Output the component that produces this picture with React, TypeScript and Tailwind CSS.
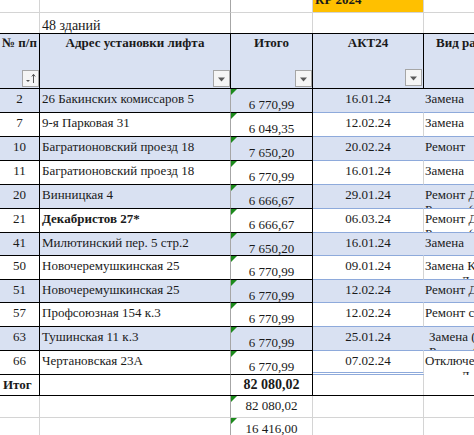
import React from 'react';

type Row = {
  n: string;
  addr: string;
  sum: string;
  date: string;
  work: string;
  more?: string;
  bold?: boolean;
  indent?: boolean;
  h: string;
};

const rows: Row[] = [
  { n: '2', addr: '26 Бакинских комиссаров 5', sum: '6 770,99', date: '16.01.24', work: 'Замена', h: 'h-[24px]' },
  { n: '7', addr: '9-я Парковая 31', sum: '6 049,35', date: '12.02.24', work: 'Замена', h: 'h-[24px]' },
  { n: '10', addr: 'Багратионовский проезд 18', sum: '7 650,20', date: '20.02.24', work: 'Ремонт', h: 'h-[24px]' },
  { n: '11', addr: 'Багратионовский проезд 18', sum: '6 770,99', date: '16.01.24', work: 'Замена', h: 'h-[24px]' },
  { n: '20', addr: 'Винницкая 4', sum: '6 666,67', date: '29.01.24', work: 'Ремонт Дверей', more: 'Ремонт (замена)', h: 'h-[24px]' },
  { n: '21', addr: 'Декабристов 27*', bold: true, sum: '6 666,67', date: '06.03.24', work: 'Ремонт Дверей', more: 'Ремонт (замена)', h: 'h-[24px]' },
  { n: '41', addr: 'Милютинский пер. 5 стр.2', sum: '7 650,20', date: '16.01.24', work: 'Замена', h: 'h-[23px]' },
  { n: '50', addr: 'Новочеремушкинская 25', sum: '6 770,99', date: '09.01.24', work: 'Замена КЛШ', more: '           Д', h: 'h-[24px]' },
  { n: '51', addr: 'Новочеремушкинская 25', sum: '6 770,99', date: '12.02.24', work: 'Ремонт Дверей', h: 'h-[23px]' },
  { n: '57', addr: 'Профсоюзная 154 к.3', sum: '6 770,99', date: '12.02.24', work: 'Ремонт станции', h: 'h-[24px]' },
  { n: '63', addr: 'Тушинская 11 к.3', sum: '6 770,99', date: '25.01.24', work: 'Замена (ремонт)', more: 'Ремонт (замена)', indent: true, h: 'h-[24px]' },
  { n: '66', addr: 'Чертановская 23А', sum: '6 770,99', date: '07.02.24', work: 'Отключение', more: '           Д', h: 'h-[24px]' },
];

function Flag() {
  return <span className="absolute left-0 top-0 h-0 w-0 border-t-[6px] border-r-[6px] border-t-[#1c8a1c] border-r-transparent" />;
}

function FilterButton({ sorted }: { sorted?: boolean }) {
  return (
    <div className="absolute right-0 bottom-[1px] flex h-[17px] w-[17px] items-center justify-center border border-[#a6a6a6] bg-[#f5f5f5]">
      {sorted ? (
        <svg width="13" height="13" viewBox="0 0 13 13">
          <polygon points="2,8 6,8 4,10" fill="#555" />
          <path d="M9.5 11V2.5" stroke="#555" strokeWidth="1" />
          <path d="M7.8 4.5L9.5 2.3L11.2 4.5" stroke="#555" strokeWidth="1" fill="none" />
        </svg>
      ) : (
        <svg width="9" height="5" viewBox="0 0 9 5" className="mt-[2px]">
          <polygon points="1,0.5 8,0.5 4.5,4.5" fill="#5a5a5a" />
        </svg>
      )}
    </div>
  );
}

function DataRow({ row, blue, last }: { row: Row; blue: boolean; last: boolean }) {
  const bg = blue ? 'bg-[#d9e1f2]' : 'bg-white';
  return (
    <div className={`flex ${row.h} ${bg}`}>
      <div className="w-[40px] shrink-0 border-r border-b border-black pt-[2px] text-center">{row.n}</div>
      <div className={`w-[191px] shrink-0 overflow-hidden whitespace-nowrap border-r border-b border-r-[#a6a6a6] border-b-black pt-[2px] pl-[2px] ${row.bold ? 'font-bold' : ''}`}>
        {row.addr}
      </div>
      <div className="relative w-[82px] shrink-0 border-r border-b border-black pt-[8px] text-center">
        <Flag />
        {row.sum}
      </div>
      <div
        className={`w-[111px] shrink-0 border-r pt-[2px] text-center ${blue ? 'border-r-[#d9e1f2]' : 'border-r-[#d4d4d4]'} ${
          last ? 'border-b-[3px] border-double border-b-[#8eaadb]' : 'border-b border-b-[#8eaadb]'
        }`}
      >
        {row.date}
      </div>
      <div className={`min-w-0 flex-1 overflow-hidden pt-[2px] ${last ? '' : 'border-b border-b-[#8eaadb]'} ${row.indent ? 'pl-[5px]' : 'pl-[1px]'}`}>
        <div className="whitespace-nowrap">{row.work}</div>
        {row.more && <div className="whitespace-pre">{row.more}</div>}
      </div>
    </div>
  );
}

export default function App() {
  return (
    <div className="h-[435px] w-[474px] overflow-hidden bg-white font-['Liberation_Serif',serif] text-[13px] leading-[15px] text-[#1a1a1a]">
      {/* row 1 */}
      <div className="flex h-[13px]">
        <div className="w-[40px] shrink-0 border-r border-b border-[#d4d4d4]" />
        <div className="w-[191px] shrink-0 border-r border-b border-r-[#a6a6a6] border-b-[#d4d4d4]" />
        <div className="w-[82px] shrink-0 border-r border-b border-[#d4d4d4]" />
        <div className="w-[111px] shrink-0 overflow-hidden border-r border-b border-[#d4d4d4] bg-[#ffc000] pl-[2px]">
          <div className="mt-[-8px] font-bold">КР 2024</div>
        </div>
        <div className="flex-1 border-b border-[#d4d4d4]" />
      </div>

      {/* row 2 */}
      <div className="flex h-[20px]">
        <div className="w-[40px] shrink-0 border-r border-[#d4d4d4]" />
        <div className="w-[191px] shrink-0 border-r border-[#a6a6a6] pt-[5px] pl-[2px] text-[14px]">48 зданий</div>
        <div className="w-[82px] shrink-0 border-r border-[#d4d4d4]" />
        <div className="w-[111px] shrink-0 border-r border-[#d4d4d4]" />
        <div className="flex-1" />
      </div>

      {/* header */}
      <div className="flex h-[56px] border-y border-black bg-[#d9e1f2] font-bold">
        <div className="relative w-[40px] shrink-0 border-r border-black pt-[1px] text-center">
          № п/п
          <FilterButton sorted />
        </div>
        <div className="relative w-[191px] shrink-0 border-r border-black pt-[1px] text-center">
          Адрес установки лифта
          <FilterButton />
        </div>
        <div className="relative w-[82px] shrink-0 border-r border-black pt-[1px] text-center">
          Итого
          <FilterButton />
        </div>
        <div className="relative w-[111px] shrink-0 border-r border-black pt-[1px] text-center">
          АКТ24
          <div className="absolute right-[1px] bottom-[1px]">
            <FilterButton />
          </div>
        </div>
        <div className="flex-1 whitespace-nowrap pt-[1px] pl-[12px]">Вид работ</div>
      </div>

      {rows.map((row, i) => (
        <DataRow key={row.n} row={row} blue={i % 2 === 0} last={i === rows.length - 1} />
      ))}

      {/* total */}
      <div className="flex h-[21px] border-b border-black font-bold">
        <div className="w-[40px] shrink-0 border-r border-black pt-[2px] pl-[3px]">Итог</div>
        <div className="w-[191px] shrink-0 border-r border-[#a6a6a6]" />
        <div className="w-[82px] shrink-0 border-r border-black pt-[2px] text-center text-[14px]">82 080,02</div>
        <div className="w-[111px] shrink-0 border-r border-[#d4d4d4]" />
        <div className="flex-1" />
      </div>

      {[
        { v: '82 080,02', pt: 'pt-[2px]' },
        { v: '16 416,00', pt: 'pt-[3px]' },
      ].map((r) => (
        <div key={r.v} className="flex h-[22px]">
          <div className="w-[40px] shrink-0 border-r border-b border-[#d4d4d4]" />
          <div className="w-[191px] shrink-0 border-r border-b border-r-[#a6a6a6] border-b-[#d4d4d4]" />
          <div className={`relative w-[82px] shrink-0 border-r border-b border-[#d4d4d4] text-center ${r.pt}`}>
            <Flag />
            {r.v}
          </div>
          <div className="w-[111px] shrink-0 border-r border-b border-[#d4d4d4]" />
          <div className="flex-1 border-b border-[#d4d4d4]" />
        </div>
      ))}
    </div>
  );
}
